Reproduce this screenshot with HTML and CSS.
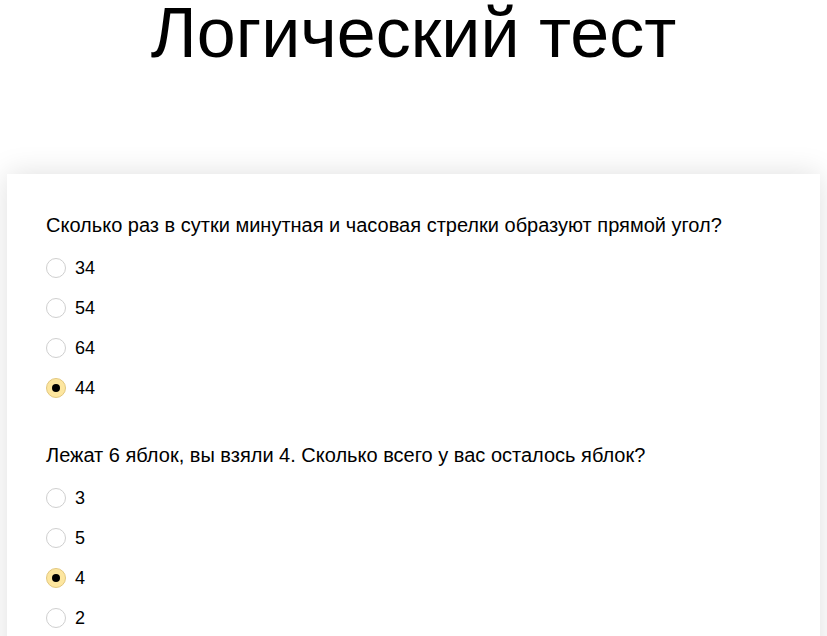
FILE: index.html
```html
<!DOCTYPE html>
<html lang="ru">
<head>
  <meta charset="UTF-8">
  <meta name="viewport" content="width=device-width, initial-scale=1.0">
  <title>Логический тест</title>
  <link rel="stylesheet" href="styles.css">
</head>
<body>
  <h1 class="title">Логический тест</h1>
  <form class="test-card">
    <div class="question">
      <p class="question-text">Сколько раз в сутки минутная и часовая стрелки образуют прямой угол?</p>
      <label class="option"><input type="radio" name="q1" value="34"><span>34</span></label>
      <label class="option"><input type="radio" name="q1" value="54"><span>54</span></label>
      <label class="option"><input type="radio" name="q1" value="64"><span>64</span></label>
      <label class="option"><input type="radio" name="q1" value="44" checked><span>44</span></label>
    </div>
    <div class="question">
      <p class="question-text">Лежат 6 яблок, вы взяли 4. Сколько всего у вас осталось яблок?</p>
      <label class="option"><input type="radio" name="q2" value="3"><span>3</span></label>
      <label class="option"><input type="radio" name="q2" value="5"><span>5</span></label>
      <label class="option"><input type="radio" name="q2" value="4" checked><span>4</span></label>
      <label class="option"><input type="radio" name="q2" value="2"><span>2</span></label>
    </div>
  </form>
</body>
</html>
```

FILE: styles.css
```css
body {
  margin: 0;
  font-family: "Liberation Sans", Arial, sans-serif;
  background: #fff;
  color: #000;
}

.title {
  margin: 0;
  font-size: 70px;
  font-weight: normal;
  line-height: 66px;
  text-align: center;
  height: 174px;
}

.test-card {
  margin: 0 7px;
  padding: 40px 39px;
  background: #fff;
  box-shadow: 0 0 28px rgba(0, 0, 0, 0.13);
}

.question {
  margin-bottom: 46px;
}

.question-text {
  margin: 0 0 22px;
  font-size: 20px;
  line-height: 22px;
}

.option {
  display: flex;
  align-items: center;
  gap: 9px;
  height: 20px;
  margin-bottom: 20px;
  font-size: 18px;
  cursor: pointer;
}

.option input {
  appearance: none;
  -webkit-appearance: none;
  margin: 0;
  width: 20px;
  height: 20px;
  border: 1px solid #cfcfcf;
  border-radius: 50%;
  background: #fff;
  display: flex;
  align-items: center;
  justify-content: center;
  box-sizing: border-box;
}

.option input:checked {
  background: #fde69f;
  border-color: #e2c77e;
}

.option input:checked::after {
  content: "";
  width: 8px;
  height: 8px;
  border-radius: 50%;
  background: #000;
}
```
